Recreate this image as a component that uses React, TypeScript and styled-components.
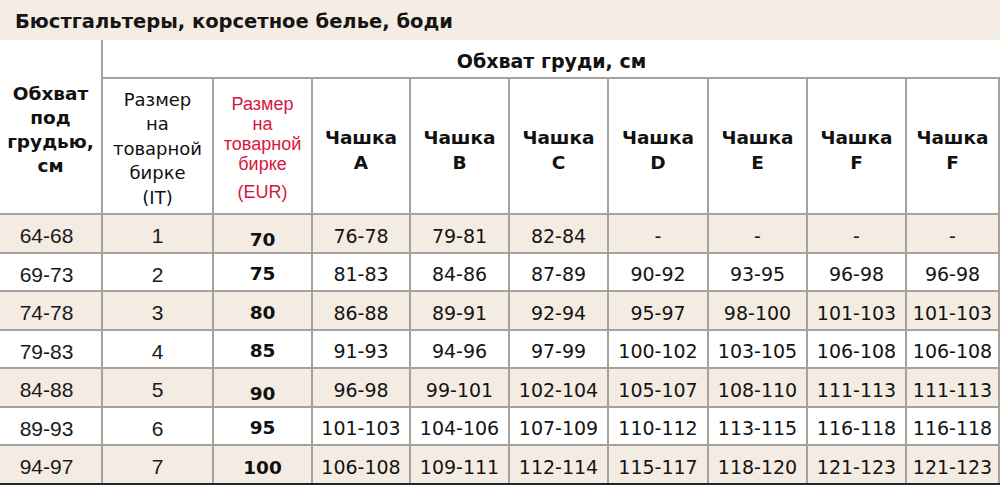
import React from "react";
import styled, { createGlobalStyle } from "styled-components";

const Global = createGlobalStyle`
  html, body { margin: 0; padding: 0; background: #ffffff; }
  body { font-family: "DejaVu Sans", Verdana, sans-serif; color: #111; }
`;

const Page = styled.div`
  width: 1000px;
  height: 485px;
  overflow: hidden;
  background: #fff;
`;

const TitleBar = styled.div`
  height: 40px;
  display: flex;
  align-items: center;
  padding-left: 15px;
  padding-top: 2px;
  box-sizing: border-box;
  background: #f5ede3;
  font-family: "DejaVu Sans", Verdana, sans-serif;
  font-weight: bold;
  font-size: 19.5px;
  color: #151515;
`;

const Grid = styled.div`
  display: grid;
  grid-template-columns: 101px 109px 97px 96px 97px 97px 98px 97px 97px 91px;
  grid-template-rows: 37px 134px 37px 36px 37px 36px 37px 36px 37px;
  gap: 2px;
  padding-right: 2px;
  background: #a5a19d;
  border-bottom: 2px solid #262626;
`;

const Cell = styled.div<{ $beige?: boolean }>`
  background: ${(p) => (p.$beige ? "#f4ece3" : "#ffffff")};
  display: flex;
  align-items: center;
  justify-content: center;
  text-align: center;
  box-sizing: border-box;
`;

const CornerHead = styled(Cell)`
  grid-row: 1 / span 2;
  font-weight: bold;
  font-size: 18.5px;
  line-height: 24px;
  padding-top: 6px;
`;

const SpanHead = styled(Cell)`
  grid-column: 2 / span 9;
  margin-right: -2px;
  font-weight: bold;
  font-size: 19px;
  padding-top: 4px;
`;

const ItHead = styled(Cell)`
  font-size: 18px;
  line-height: 24.5px;
  padding-top: 6px;
`;

const EurHead = styled(Cell)`
  flex-direction: column;
  font-family: "Liberation Sans", Arial, sans-serif;
  font-size: 18px;
  line-height: 20px;
  color: #d8153d;
  padding-top: 4px;
`;

const EurTag = styled.span`
  margin-top: 8px;
`;

const CupHead = styled(Cell)`
  font-weight: bold;
  font-size: 18.5px;
  line-height: 25px;
  padding-top: 8px;
`;

const ArialCell = styled(Cell)<{ $shift?: number }>`
  font-family: "Liberation Sans", Arial, sans-serif;
  font-size: 21px;
  color: #1a1a1a;
  padding-top: 5px;
  padding-right: ${(p) => (p.$shift ? `${p.$shift}px` : "0")};
`;

const EurCell = styled(Cell)<{ $drop?: number }>`
  font-weight: bold;
  font-size: 18.5px;
  padding-top: ${(p) => (p.$drop ? `${p.$drop}px` : "3px")};
`;

const DataCell = styled(Cell)`
  font-size: 19px;
  color: #141414;
  white-space: nowrap;
  padding-top: 4px;
`;

const cups = ["A", "B", "C", "D", "E", "F", "F"];

const rows = [
  { under: "64-68", it: "1", eur: "70", drop: 12, vals: ["76-78", "79-81", "82-84", "-", "-", "-", "-"] },
  { under: "69-73", it: "2", eur: "75", drop: 0, vals: ["81-83", "84-86", "87-89", "90-92", "93-95", "96-98", "96-98"] },
  { under: "74-78", it: "3", eur: "80", drop: 0, vals: ["86-88", "89-91", "92-94", "95-97", "98-100", "101-103", "101-103"] },
  { under: "79-83", it: "4", eur: "85", drop: 0, vals: ["91-93", "94-96", "97-99", "100-102", "103-105", "106-108", "106-108"] },
  { under: "84-88", it: "5", eur: "90", drop: 12, vals: ["96-98", "99-101", "102-104", "105-107", "108-110", "111-113", "111-113"] },
  { under: "89-93", it: "6", eur: "95", drop: 0, vals: ["101-103", "104-106", "107-109", "110-112", "113-115", "116-118", "116-118"] },
  { under: "94-97", it: "7", eur: "100", drop: 6, vals: ["106-108", "109-111", "112-114", "115-117", "118-120", "121-123", "121-123"] },
];

export default function App() {
  return (
    <Page>
      <Global />
      <TitleBar>Бюстгальтеры, корсетное белье, боди</TitleBar>
      <Grid>
        <CornerHead>
          Обхват
          <br />
          под
          <br />
          грудью,
          <br />
          см
        </CornerHead>
        <SpanHead>Обхват груди, см</SpanHead>
        <ItHead>
          Размер
          <br />
          на
          <br />
          товарной
          <br />
          бирке
          <br />
          (IT)
        </ItHead>
        <EurHead>
          <span>Размер</span>
          <span>на</span>
          <span>товарной</span>
          <span>бирке</span>
          <EurTag>(EUR)</EurTag>
        </EurHead>
        {cups.map((c, i) => (
          <CupHead key={i}>
            Чашка
            <br />
            {c}
          </CupHead>
        ))}
        {rows.map((r, ri) => {
          const beige = ri % 2 === 0;
          return (
            <React.Fragment key={ri}>
              <ArialCell $beige={beige} $shift={8}>
                {r.under}
              </ArialCell>
              <ArialCell $beige={beige}>{r.it}</ArialCell>
              <EurCell $beige={beige} $drop={r.drop}>
                {r.eur}
              </EurCell>
              {r.vals.map((v, vi) => (
                <DataCell key={vi} $beige={beige}>
                  {v}
                </DataCell>
              ))}
            </React.Fragment>
          );
        })}
      </Grid>
    </Page>
  );
}
